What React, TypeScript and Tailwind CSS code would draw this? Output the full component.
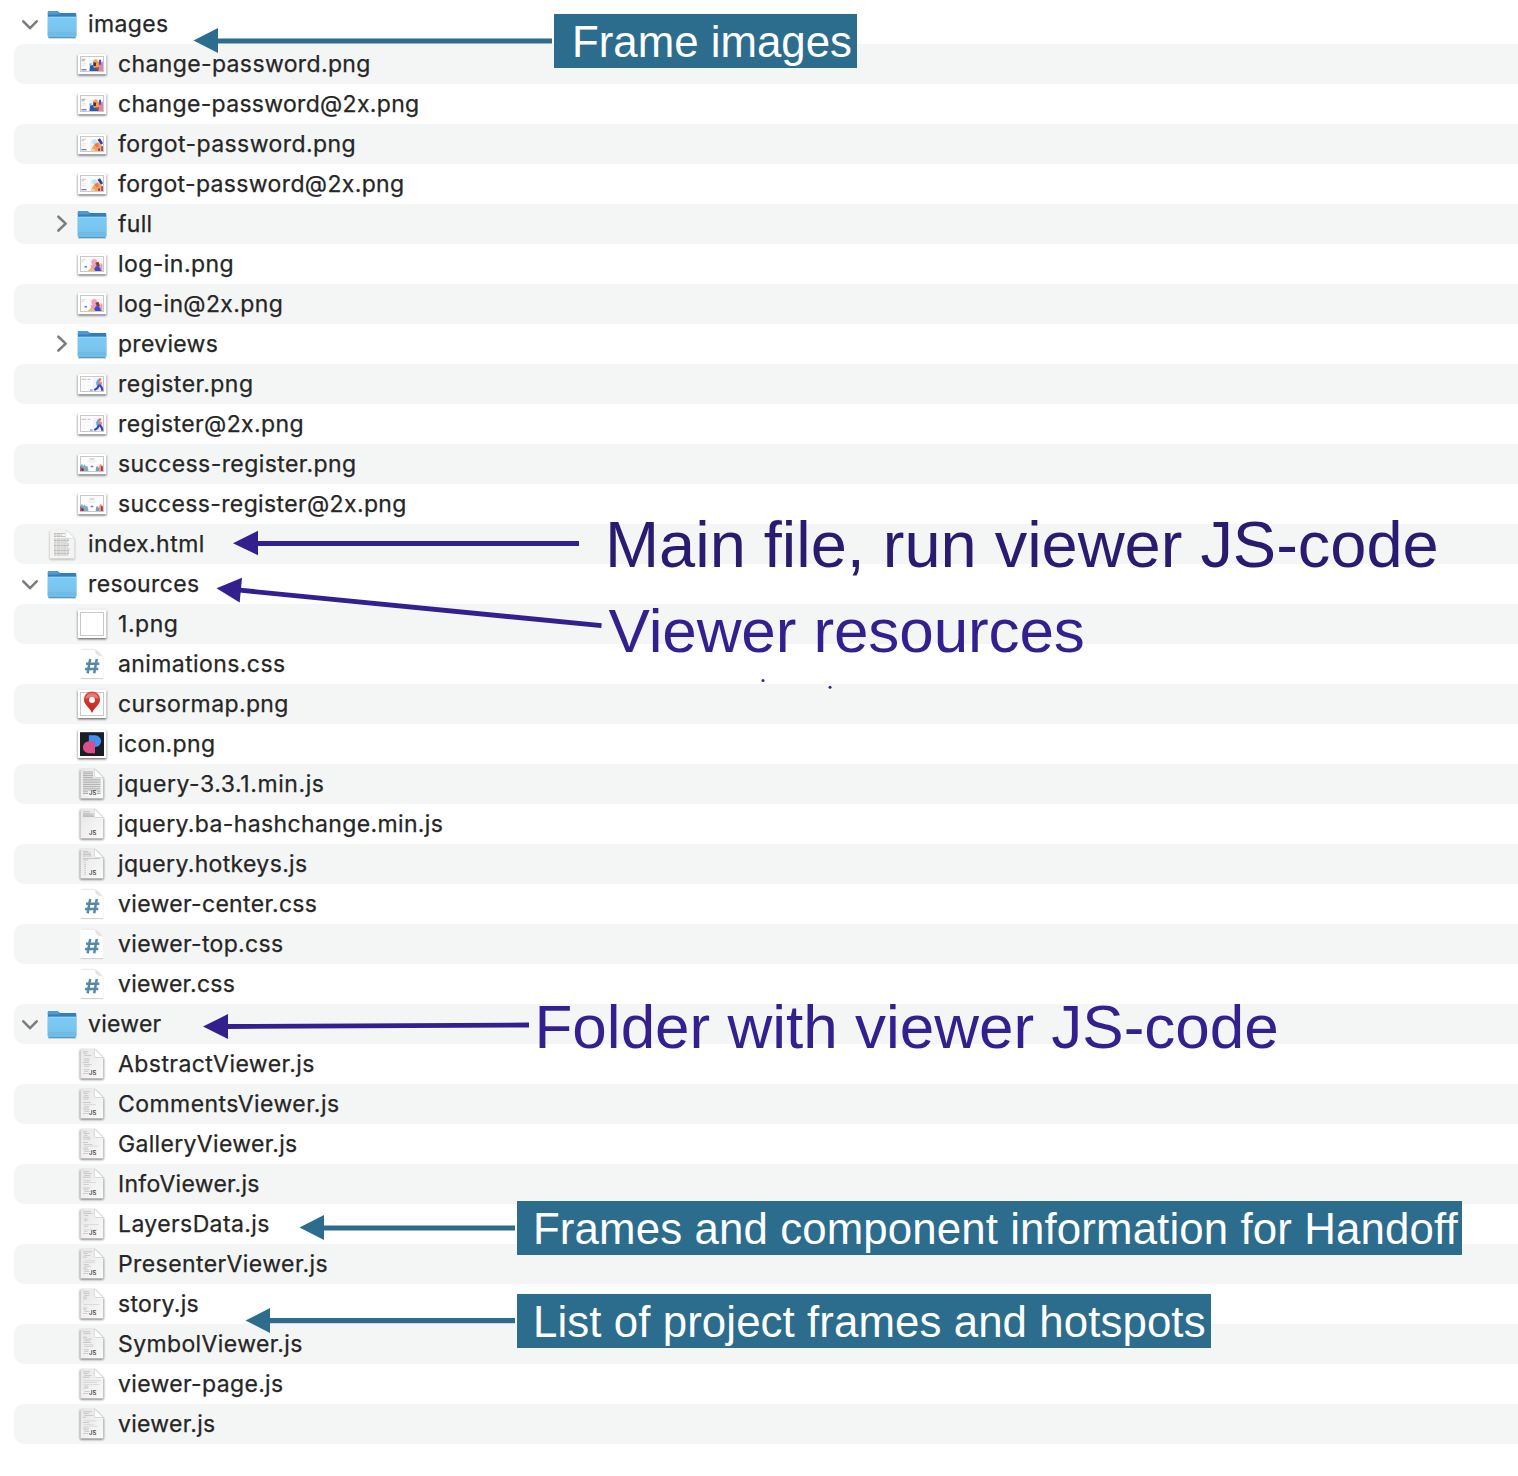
import React from "react";

type Kind =
  | "folder" | "change" | "forgot" | "login" | "register" | "success"
  | "html" | "blank" | "css" | "pin" | "logo" | "js";

type Entry = {
  name: string;
  kind: Kind;
  tracking: number;
  root?: boolean;
  state?: "open" | "closed";
  tall?: boolean;
  code?: number[];
};

const entries: Entry[] = [
  { name: "images", kind: "folder", tracking: 0.367, root: true, state: "open" },
  { name: "change-password.png", kind: "change", tracking: 0.368 },
  { name: "change-password@2x.png", kind: "change", tracking: 0.313, tall: true },
  { name: "forgot-password.png", kind: "forgot", tracking: 0.43 },
  { name: "forgot-password@2x.png", kind: "forgot", tracking: 0.354, tall: true },
  { name: "full", kind: "folder", tracking: 0.309, state: "closed" },
  { name: "log-in.png", kind: "login", tracking: 0.449 },
  { name: "log-in@2x.png", kind: "login", tracking: 0.361, tall: true },
  { name: "previews", kind: "folder", tracking: 0.29, state: "closed" },
  { name: "register.png", kind: "register", tracking: 0.471 },
  { name: "register@2x.png", kind: "register", tracking: 0.401, tall: true },
  { name: "success-register.png", kind: "success", tracking: 0.419 },
  { name: "success-register@2x.png", kind: "success", tracking: 0.367, tall: true },
  { name: "index.html", kind: "html", tracking: 0.463, root: true },
  { name: "resources", kind: "folder", tracking: 0.368, root: true, state: "open" },
  { name: "1.png", kind: "blank", tracking: 0.547 },
  { name: "animations.css", kind: "css", tracking: 0.406 },
  { name: "cursormap.png", kind: "pin", tracking: 0.376 },
  { name: "icon.png", kind: "logo", tracking: 0.375 },
  { name: "jquery-3.3.1.min.js", kind: "js", tracking: 0.57, code: [-1] },
  { name: "jquery.ba-hashchange.min.js", kind: "js", tracking: 0.37, code: [-2] },
  { name: "jquery.hotkeys.js", kind: "js", tracking: 0.347, code: [-3] },
  { name: "viewer-center.css", kind: "css", tracking: 0.326 },
  { name: "viewer-top.css", kind: "css", tracking: 0.331 },
  { name: "viewer.css", kind: "css", tracking: 0.252 },
  { name: "viewer", kind: "folder", tracking: 0.255, root: true, state: "open" },
  { name: "AbstractViewer.js", kind: "js", tracking: 0.433, code: [5, 3, 7, 0, 6, 5, 6, 8, 5, 0, 6, 4, 6] },
  { name: "CommentsViewer.js", kind: "js", tracking: 0.436, code: [7, 4, 4, 6, 5, 0, 8, 12, 5, 6, 6, 5, 6] },
  { name: "GalleryViewer.js", kind: "js", tracking: 0.319, code: [4, 6, 3, 7, 7, 0, 5, 9, 14, 5, 5, 6, 5] },
  { name: "InfoViewer.js", kind: "js", tracking: 0.289, code: [6, 8, 6, 8, 0, 6, 13, 5, 0, 7, 5, 7, 5] },
  { name: "LayersData.js", kind: "js", tracking: 0.394, code: [8, 9, 4, 0, 4, 3, 0, 15, 4, 0, 14, 3, 5] },
  { name: "PresenterViewer.js", kind: "js", tracking: 0.412, code: [9, 4, 6, 4, 0, 11, 12, 5, 6, 4, 5, 5, 5] },
  { name: "story.js", kind: "js", tracking: 0.323, code: [6, 6, 5, 4, 3, 0, 0, 16, 0, 4, 3, 5, 4] },
  { name: "SymbolViewer.js", kind: "js", tracking: 0.38, code: [7, 7, 0, 4, 8, 6, 8, 10, 9, 0, 5, 4, 5] },
  { name: "viewer-page.js", kind: "js", tracking: 0.342, code: [7, 5, 7, 7, 0, 16, 14, 16, 4, 5, 0, 5, 5] },
  { name: "viewer.js", kind: "js", tracking: 0.292, code: [9, 5, 9, 3, 0, 12, 6, 10, 13, 6, 5, 5, 5] },
];

function Folder() {
  return (
    <>
      <path d="M1.200 33.900h28v.8h-28z" fill="#000" opacity=".22" />
      <path d="M.8 8.200Q.8 7 2 7h7.400q.9 0 1.600.6l1.300 1q.5.4 1.200.4h14.700q1.100 0 1.100 1.100V32q0 1.800-1.800 1.800h-25Q.8 33.800.8 32Z" fill="#2f7fc0" />
      <path d="M.8 8.400Q.8 7 2 7h7.400q.9 0 1.600.6l1.500 1.400v1.500H.8Z" fill="#4f9bd0" />
      <path d="M.8 14q0-1.300 1.300-1.300h25.900q1.300 0 1.300 1.300v18q0 1.800-1.800 1.800h-25Q.8 33.800.8 32Z" fill="url(#folderFront)" />
      <path d="M1.200 13.300h27.700" stroke="#a3dcf8" strokeWidth=".8" />
      <path d="M1 28.900h28M1 30.800h28" stroke="#62aedb" strokeWidth=".6" />
      <path d="M1.800 33.400h26.400" stroke="#4b94be" strokeWidth=".9" />
    </>
  );
}

function Art({ kind }: { kind: Kind }) {
  switch (kind) {
    case "change":
      return (
        <>
          <path d="M4.500 14.500h4M4.500 16h3" stroke="#a2a2a9" strokeWidth=".9" />
          <path d="M4.500 18.500h5M4.500 20.500h5" stroke="#e2e2e6" strokeWidth=".8" />
          <path d="M4.500 25h5" stroke="#6a66e8" strokeWidth="1.300" />
          <path d="M12 15h14v11.300H12z" fill="#f3edf9" />
          <path d="M20 17h6v9.300h-6z" fill="#df86a6" />
          <path d="M22 15h2v5h-2z" fill="#4a4fcd" />
          <path d="M16 16.500q2-3.500 4.500-1l1 3 .6 5-5.500.4Z" fill="#f6a43a" />
          <path d="m16.400 17.500 2.800.5-.4 3.200-2.500.2Z" fill="#3b2c6c" />
          <path d="m12.500 26.300.6-6h2.600l1.200 2.700 4 .3.700 3Z" fill="#275cac" />
          <path d="m12.500 19 2.200-.9v3h-2Z" fill="#67b8df" />
          <path d="M18.500 22.500h3.500v2h-3.500z" fill="#c2433f" />
        </>
      );
    case "forgot":
      return (
        <>
          <path d="M4.500 14.500h4.500M4.500 16h2.500" stroke="#b8b8bf" strokeWidth=".8" />
          <path d="M4.500 19h5M4.500 21h5" stroke="#e1e1e6" strokeWidth=".7" />
          <path d="M4.500 24.800h5" stroke="#6a66e8" strokeWidth="1.200" />
          <path d="M13 15h13v11.300H13z" fill="#f1f0fb" />
          <circle cx="17.500" cy="17" r="2.500" fill="#bde7f7" />
          <path d="m14 26.300 1.500-4 2.500-3.500 3.300-1.300 4.200 4.300.4 4.500Z" fill="#f3a657" />
          <path d="m18 19.500 2.500-1.500 1.500 3.500-3 1.500Z" fill="#e67861" />
          <path d="m20.500 15 2.500-1.500 3 5-2 1.500Z" fill="#343da2" />
          <path d="m15 24 3 .5v1.800h-4Z" fill="#ead29a" />
          <path d="M21 23.500h2v2.800h-2zM24.300 21.500h1.600v4.800h-1.600z" fill="#a94063" />
        </>
      );
    case "login":
      return (
        <>
          <path d="M4.500 15h4M4.500 17h2" stroke="#c3c3ca" strokeWidth=".7" />
          <path d="M7.500 22h2.500" stroke="#7a75ec" strokeWidth="1.700" />
          <path d="M12.500 13.500h13.400v12.800H12.500z" fill="#f8f3fb" />
          <circle cx="17.200" cy="17" r="2.900" fill="#f0a5bb" />
          <path d="m14 20.500 4.500-2.500 3.500 4-2 2.500h-6Z" fill="#ee9fb7" />
          <path d="m18.500 18 3-1 1.500 4-3 1.300Z" fill="#8d3c35" />
          <path d="m16 25.500 3-4h3.500l2.500 4.800h-9Z" fill="#3d48d4" />
          <path d="m10.500 26.300 3.500-3 3.500 1 .5 2Z" fill="#f2b95b" />
          <path d="m23.500 18 2 1.500v6.700l-2-1Z" fill="#ef9e9c" />
          <path d="M22 21h1.500v2H22z" fill="#5ea2db" />
        </>
      );
    case "register":
      return (
        <>
          <path d="M4.500 14.500h4.800M10.500 14.500h3" stroke="#bcbcc3" strokeWidth="1" />
          <path d="M5 17.500h3.500M10 17.500h4M5 20.500h3.500M10 20.500h4M5 23.500h3.500" stroke="#ebebef" strokeWidth=".6" />
          <path d="M15.500 13h10.400v13.300H15.500z" fill="#f3f1fc" />
          <path d="m19 17.500 2-3 2 1-.5 4.500-3 .7Z" fill="#64acdc" />
          <circle cx="22.800" cy="14.800" r="1.300" fill="#d87356" />
          <path d="m22 16.200 3.300 1.500-1 3-2.500.6Z" fill="#ee8174" />
          <path d="m22.400 20 2.200 2.500.8 3.500M22 20l-1.700 3.500-3 1.800" fill="none" stroke="#3349c8" strokeWidth="2.200" />
          <path d="M13.200 25.300h2.400" stroke="#6d65e8" strokeWidth="1.100" />
        </>
      );
    case "success":
      return (
        <>
          <path d="M12.500 14.200h5" stroke="#aaaab1" strokeWidth=".8" />
          <path d="M10.500 16.200h9M12 17.700h6" stroke="#e4e4e9" strokeWidth=".6" />
          <path d="M13.700 21.700h2.600" stroke="#766ded" strokeWidth="1.500" />
          <path d="M3.500 26.300v-6l1.600-.8 1.300 2 1-1.700 1.600 1.800 1.300-.7 1.200 5.400Z" fill="#62aedb" />
          <path d="M3.300 26.300v-5l1.700 2.500v2.500Z" fill="#c83a42" />
          <path d="m6.500 22 1.400-.5.800 4.800h-2Z" fill="#ec8b70" />
          <path d="M5 23.500h1.500v2.800H5z" fill="#343b78" />
          <path d="m18.500 26.300.7-4.500 1.600-.5.900 2.200 1.200-4 2.300.4.800 6.400Z" fill="#ed9778" />
          <path d="m19 23 2.500-.5.500 3.800h-3Z" fill="#5ea3d7" />
          <path d="M24 21.500h1.800v4.800H24z" fill="#b03149" />
        </>
      );
    default:
      return null;
  }
}

function Thumb({ kind, tall }: { kind: Kind; tall?: boolean }) {
  const top = tall ? 9 : 10;
  const h = 30.3 - top;
  return (
    <>
      <rect x=".8" y={top + 0.2} width="28.600" height={h} rx=".6" fill="#000" filter="url(#soft)" opacity=".6" />
      <rect x=".8" y={top} width="28.600" height={h} rx=".5" fill="#fff" />
      <rect x="3.500" y={top + 2.5} width="23" height={tall ? 16 : 15} fill="#fdfdfd" stroke="#c9c9c9" />
      <g transform="translate(0 .8)"><Art kind={kind} /></g>
    </>
  );
}

function Square({ kind }: { kind: Kind }) {
  return (
    <>
      <rect x=".8" y="5.800" width="28.600" height="28.500" rx=".6" fill="#000" filter="url(#soft)" opacity=".6" />
      <rect x=".8" y="5.500" width="28.600" height="28.600" rx=".5" fill="#fff" />
      {kind === "logo" ? (
        <>
          <rect x="3" y="8.200" width="24" height="23.800" fill="#1d1e25" />
          <path d="M11.900 11.300h6.300a5.850 5.850 0 0 1 0 11.700h-6.300Z" fill="#3f92f4" />
          <path d="M18 17.200v12.100h-6a6.050 6.050 0 0 1 0-12.100Z" fill="#d94f8a" />
        </>
      ) : (
        <rect x="3.500" y="8.500" width="23" height="23" fill="#fff" stroke="#c9c9c9" />
      )}
      {kind === "pin" && (
        <>
          <path d="M15 29c-1.300-3.600-4.200-5.400-6.300-8.400a8.100 8.100 0 1 1 12.600 0C19.200 23.600 16.300 25.400 15 29Z" fill="url(#pinRed)" />
          <path d="M8.200 15a6.900 6.900 0 0 1 13.600 0q-6.800-3.500-13.600 0Z" fill="#fff" opacity=".3" />
          <circle cx="15" cy="15.900" r="3" fill="#fff" />
        </>
      )}
    </>
  );
}

function Lines({ code }: { code: number[] }) {
  if (code[0] === -1)
    return (
      <g stroke="#a6a6a6" strokeWidth=".9">
        <path d="M6 8h10M6 9.800h10M6 11.600h10M6 13.400h10" />
        <path d="M6 15.200h17.500M6 17h17.500M6 18.800h17.500M6 20.600h17.500M6 22.400h17.500M6 24.200h17.500M6 26h17.500M6 27.800h5M6 29.500h5M20 27.800h3.500M20 29.500h3.500" />
      </g>
    );
  if (code[0] === -2)
    return (
      <g stroke="#ababab" strokeWidth=".8">
        <path d="M6 7.500h7M6 9h7" opacity=".6" />
        <path d="M6 10h10.500M6 11.300h10.500M6 12.600h11" />
      </g>
    );
  if (code[0] === -3)
    return (
      <g stroke="#b0b0b0" strokeWidth=".6">
        <path d="M6 7.500h5M6 9h8M6 10.500h8M6 12h9M6 14.500h17M6 16h5" />
        <path d="M8 18v13" strokeWidth="1.300" strokeDasharray="1.200 .8" opacity=".7" />
      </g>
    );
  return (
    <g stroke="#a9a9a9" strokeWidth=".7">
      {code.map((n, i) =>
        n ? <path key={i} d={`M${6 + (i % 3) * 0.7} ${7.8 + i * 1.8}h${i < 4 ? Math.min(n, 9) : n}`} opacity={n > 9 ? 0.45 : 0.75} /> : null,
      )}
    </g>
  );
}

function Script({ code }: { code: number[] }) {
  return (
    <>
      <path d="M3.200 5h14.500l8.800 8.800v20.800H3.200Z" fill="#000" filter="url(#soft)" opacity=".6" />
      <path d="M3.400 4.800h14l8.900 8.700v20.900H3.400Z" fill="url(#paper)" />
      <Lines code={code} />
      <path d="M17.400 4.800v7.200q0 1.500 1.500 1.500h7.400Z" fill="#fff" stroke="#bcbcbc" strokeWidth=".5" />
      <text x="12" y="31" fontSize="5.700" fontWeight="600" fontFamily="Inter" fill="#4a4a4a" textLength="7.300" lengthAdjust="spacingAndGlyphs">JS</text>
    </>
  );
}

function StyleDoc() {
  return (
    <>
      <path d="M3.300 5h13.200l3 1.200 6.800 7.500v21H3.300Z" fill="#fff" />
      <path d="M4 5.400h12.500q1.400.2 2 2.500.5 3.300 3.500 3.800 3.200.4 4.300 2.500-1-3.800-3.800-6Q20 5.400 16.500 5.200Z" fill="#e4e5e5" />
      <path d="M4 5.300h12.500" stroke="#dcdcdc" strokeWidth=".6" />
      <path d="M3.500 34.600h22.800" stroke="#c6c8c8" strokeWidth=".9" />
      <path d="M26.300 14v20.500" stroke="#ebebeb" strokeWidth=".5" />
      <path d="m13.200 15-2.600 14.300M19.800 15l-2.600 14.300M9 19.700h13.300M8 25h13.300" stroke="#548aa8" strokeWidth="2.500" fill="none" />
    </>
  );
}

function HtmlDoc() {
  return (
    <>
      <path d="M2.900 6.300h16.500l8.200 8v20.200H2.900Z" fill="#000" filter="url(#soft)" opacity=".3" />
      <path d="M2.900 6.100h16.600l8 8v19.400q0 1-1 1H3.900q-1 0-1-1Z" fill="#f4f4f3" />
      <path d="M7 9.500h11M7 11h8M7 12.500h11M7 15h15.500M7 16.500h15M7 18h14M7 20h15.500M7 21.500h15M7 23h14M7 25h16M7 26.500h15M7 28h15.500M7 29.500h15M7 31h14" stroke="#b0b0b0" strokeWidth=".8" strokeDasharray="2.400 .35 3.300 .3" />
      <path d="M19 6.100v7q0 1.200 1.200 1.200h7.300Z" fill="#fff" stroke="#ccc" strokeWidth=".5" />
    </>
  );
}

function FileIcon({ entry }: { entry: Entry }) {
  const { kind, tall, code = [] } = entry;
  return (
    <svg viewBox="0 0 30 40" className="h-10 w-[30px] shrink-0 overflow-visible">
      {kind === "folder" ? <Folder />
        : kind === "js" ? <Script code={code} />
        : kind === "css" ? <StyleDoc />
        : kind === "html" ? <HtmlDoc />
        : kind === "blank" || kind === "pin" || kind === "logo" ? <Square kind={kind} />
        : <Thumb kind={kind} tall={tall} />}
    </svg>
  );
}

function Disclosure({ state }: { state?: "open" | "closed" }) {
  return (
    <svg viewBox="0 0 20 40" className="mr-[7px] h-10 w-5 shrink-0" fill="none" stroke="#7d7d7d" strokeWidth="2.600" strokeLinecap="round" strokeLinejoin="round">
      {state === "open" && <path d="m3.300 17.300 6.700 6.900 6.700-6.900" />}
      {state === "closed" && <path d="m8.400 12.700 7.300 6.900-7.300 6.900" />}
    </svg>
  );
}

function Row({ entry, striped }: { entry: Entry; striped: boolean }) {
  return (
    <li className={`ml-3.5 flex h-10 items-center rounded-l-[10px] ${striped ? "bg-[#f4f5f5]" : ""} ${entry.root ? "pl-1.5" : "pl-9"}`}>
      <Disclosure state={entry.state} />
      <FileIcon entry={entry} />
      <span
        className="ml-[11px] whitespace-pre text-[23px] leading-10 [-webkit-text-stroke:0.25px_#262626]"
        style={{ letterSpacing: entry.tracking }}
      >
        {entry.name}
      </span>
    </li>
  );
}

function Arrows() {
  return (
    <svg viewBox="0 0 1518 1476" className="pointer-events-none absolute inset-0 h-[1476px] w-[1518px]">
      <defs>
        <linearGradient id="folderFront" x2="0" y2="1">
          <stop offset="0" stopColor="#7dcaf4" />
          <stop offset="1" stopColor="#74c0ea" />
        </linearGradient>
        <linearGradient id="paper" x1="0" y1="0" x2="1" y2="1">
          <stop offset="0" stopColor="#e6e6e6" />
          <stop offset="1" stopColor="#fafafa" />
        </linearGradient>
        <linearGradient id="pinRed" x2="0" y2="1">
          <stop offset="0" stopColor="#e0483f" />
          <stop offset="1" stopColor="#c3221b" />
        </linearGradient>
        <filter id="soft" x="-20%" y="-20%" width="140%" height="150%">
          <feOffset dy=".5" />
          <feGaussianBlur stdDeviation=".8" />
        </filter>
      </defs>
      <g fill="#2c6d8e" stroke="#2c6d8e">
        <path d="M217 41h335M322 1228h193M268 1320.700h247" strokeWidth="5.200" />
        <path d="m193.500 40.500 24.500-12.500v25ZM299.500 1227.500l24.500-12.500v25ZM245.500 1320.500l24.500-12.500v25Z" stroke="none" />
      </g>
      <g fill="#341f8f" stroke="#341f8f">
        <path d="M257 543.500h322M240 590.200l361.500 35.500M227 1026.500l302-1.500" strokeWidth="4.800" />
        <path d="m233 543.200 25-12.500v24.500ZM216.500 588.300l25.500-10.500-2.300 24.700ZM203 1026.600l25-12.500v25Z" stroke="none" />
        <circle cx="763" cy="680.500" r="1.500" stroke="none" />
        <circle cx="830" cy="687.300" r="1.500" stroke="none" />
      </g>
    </svg>
  );
}

const tag = "absolute flex h-[54px] items-center whitespace-pre bg-[#2c6d8e] pt-0.5 font-['Liberation_Sans'] leading-none text-white";
const note = "absolute whitespace-pre font-['Liberation_Sans'] leading-none";

export default function App() {
  return (
    <main className="relative h-[1476px] w-[1518px] overflow-hidden bg-white pt-1 font-['Inter',sans-serif] text-[#262626]">
      <ul>
        {entries.map((entry, i) => (
          <Row key={entry.name} entry={entry} striped={i % 2 === 1} />
        ))}
      </ul>
      <Arrows />
      <div className={`${tag} left-[554px] top-[13.500px] w-[303px] pl-[18px] text-[43.800px]`}>Frame images</div>
      <div className={`${note} left-[605px] top-[512px] text-[65px] tracking-[-0.03px] text-[#2a1a70]`}>Main file, run viewer JS-code</div>
      <div className={`${note} left-[608.500px] top-[600px] text-[62px] tracking-[-0.1px] text-[#341f8f]`}>Viewer resources</div>
      <div className={`${note} left-[534.500px] top-[996px] text-[62px] text-[#341f8f]`}>Folder with viewer JS-code</div>
      <div className={`${tag} left-[517px] top-[1200.500px] w-[945px] pl-4 text-[43.800px] tracking-[0.12px]`}>Frames and component information for Handoff</div>
      <div className={`${tag} left-[517px] top-[1293.500px] w-[694px] pl-4 text-[43.800px] tracking-[0.09px]`}>List of project frames and hotspots</div>
    </main>
  );
}
